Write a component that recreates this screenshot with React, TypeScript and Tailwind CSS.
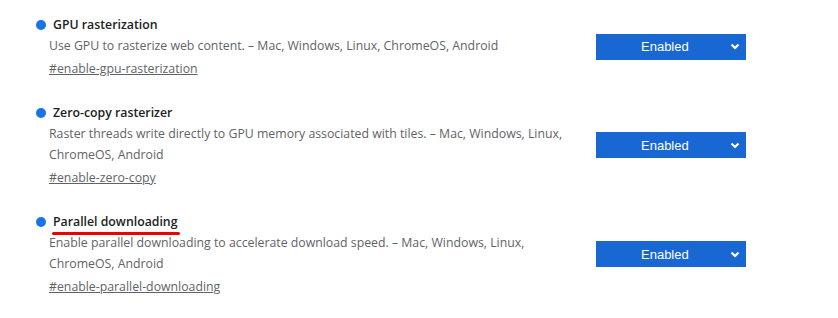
export default function App() {
  const flags = [
    {
      name: 'GPU rasterization',
      desc: 'Use GPU to rasterize web content. – Mac, Windows, Linux, ChromeOS, Android',
      id: '#enable-gpu-rasterization',
    },
    {
      name: 'Zero-copy rasterizer',
      desc: 'Raster threads write directly to GPU memory associated with tiles. – Mac, Windows, Linux, ChromeOS, Android',
      id: '#enable-zero-copy',
    },
    {
      name: 'Parallel downloading',
      desc: 'Enable parallel downloading to accelerate download speed. – Mac, Windows, Linux, ChromeOS, Android',
      id: '#enable-parallel-downloading',
      marked: true,
    },
  ];

  return (
    <div className="w-[838px] h-[318px] bg-white pl-[36px] pr-[92px] pt-[14px] font-['Open_Sans',sans-serif] text-[12.3px] leading-[21px]">
      {flags.map((f) => (
        <div key={f.id} className="flex items-center justify-between mb-[23px]">
          <div className="w-[535px]">
            <div className="flex items-center">
              <span className="w-[10px] h-[10px] rounded-full bg-[#1a73e8] mr-[7px]" />
              <span className="relative font-semibold text-[#202124]">
                {f.name}
                {f.marked && (
                  <span className="absolute left-[-1px] right-[-3px] bottom-[-3px] h-[3px] rounded-full bg-[#ee0000]" />
                )}
              </span>
            </div>
            <p className="pl-[13px] text-[#5f6368]">{f.desc}</p>
            <a className="block pl-[13px] mt-[2px] text-[#5f6368] underline">{f.id}</a>
          </div>
          <div className="w-[150px] h-[26px] bg-[#1967d2] text-white flex items-center justify-between pl-[45px] pr-[6px] font-['Liberation_Sans',sans-serif] text-[13px]">
            <span>Enabled</span>
            <svg width="10" height="7" viewBox="0 0 10 7" fill="none">
              <path d="M1.5 1.5 L5 5 L8.5 1.5" stroke="white" strokeWidth="2.2" />
            </svg>
          </div>
        </div>
      ))}
    </div>
  );
}
